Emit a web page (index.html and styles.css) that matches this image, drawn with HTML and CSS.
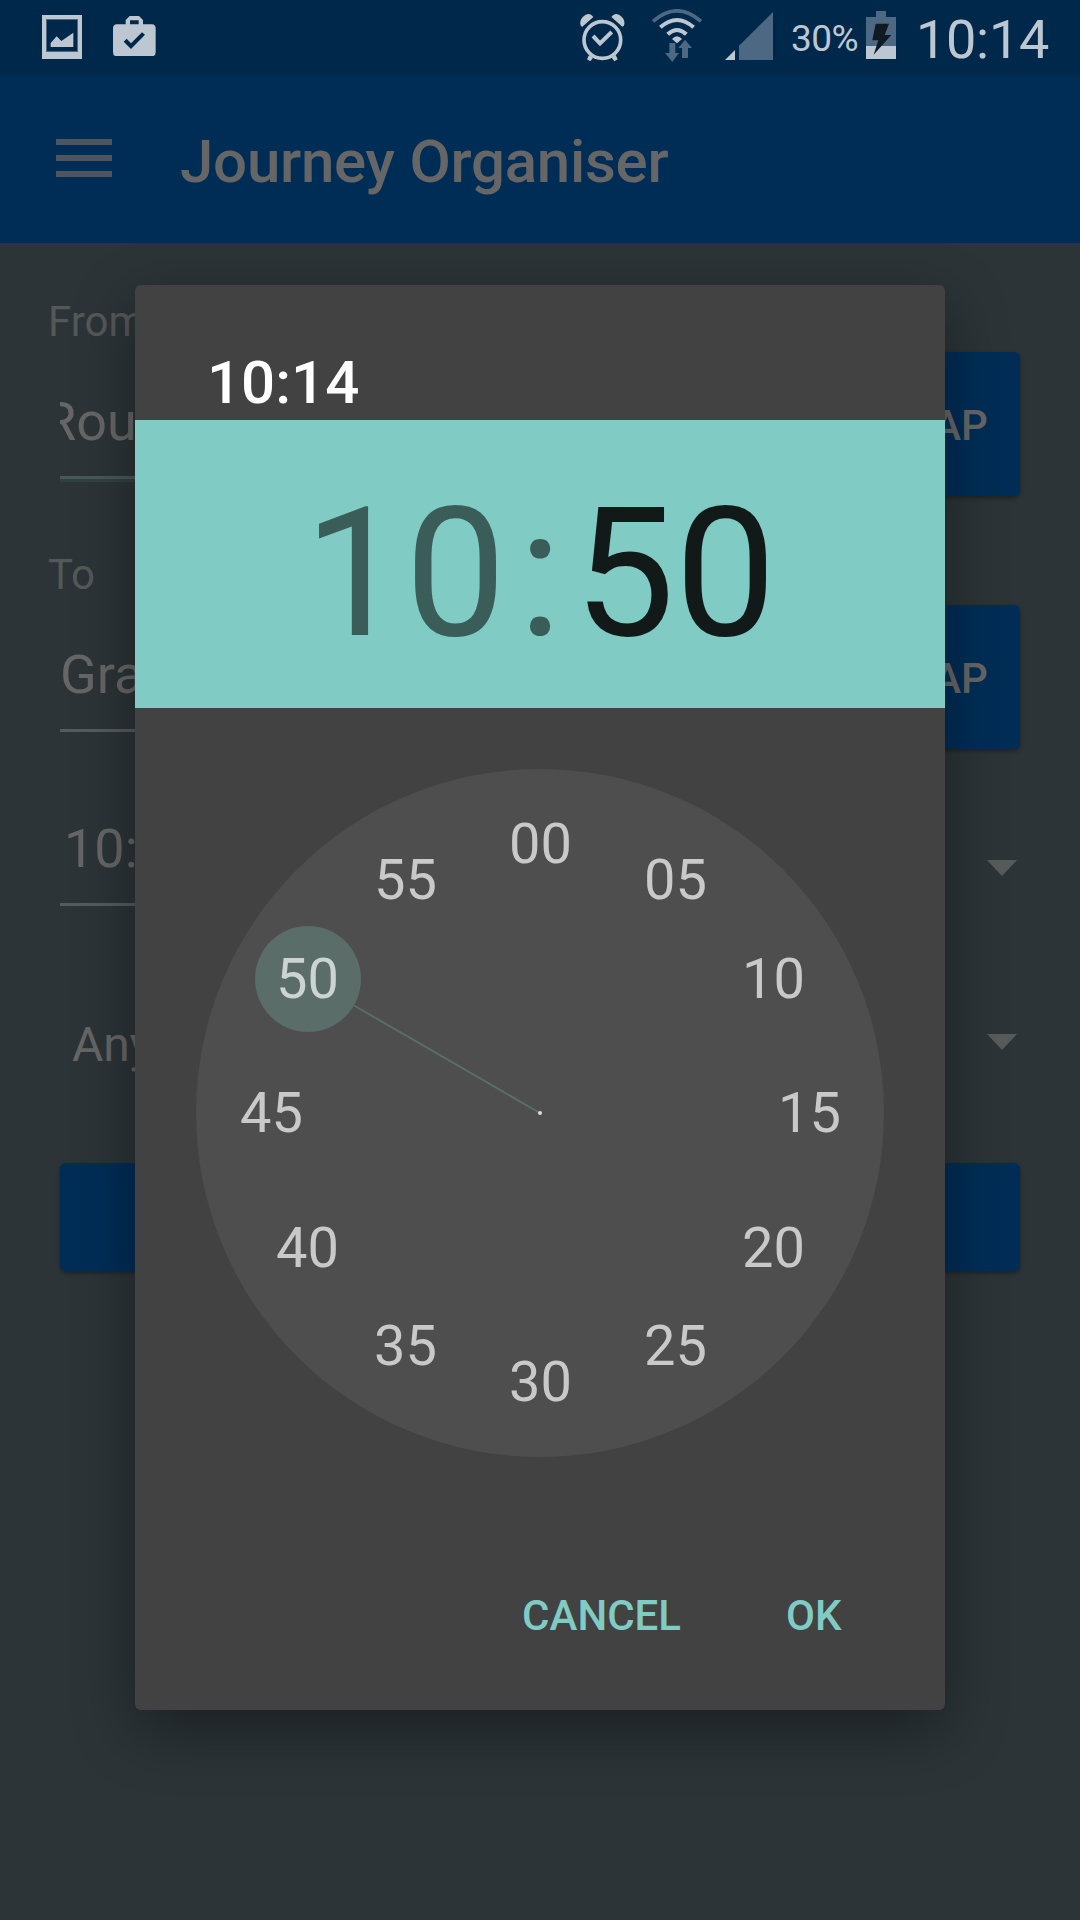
FILE: index.html
```html
<!DOCTYPE html>
<html lang="en">
<head>
<meta charset="utf-8">
<title>Journey Organiser</title>
<link rel="stylesheet" href="styles.css">
</head>
<body>
<div class="screen">
  <header class="status">
    <svg class="icon-picture" viewBox="0 0 120 132"><path fill="#bdc7d1" fill-rule="evenodd" d="M0 0H120V132H0ZM13 13V110H107V13Z"/><path fill="#4d6882" fill-rule="evenodd" d="M12 12H108V111H12ZM15 15V108H105V15Z"/><path fill="#bdc7d1" d="M26 96V84L44 64L58 78L94 53V96Z"/></svg>
    <svg class="icon-bag" viewBox="0 0 128 121"><path fill="#bdc7d1" fill-rule="evenodd" d="M11 25H38V12L50 0H78L90 12V25H117Q128 26 128 37V109Q128 121 116 121H12Q0 121 0 109V37Q0 26 11 25ZM51 13V25H77V13ZM32 77L54 99L96 56L87 49L54 82L41 68Z"/></svg>
    <span class="spacer"></span>
    <svg class="icon-alarm" viewBox="0 0 134 144" fill="none" stroke="#bdc7d1"><circle cx="67" cy="81" r="55" stroke-width="11"/><path fill="#bdc7d1" stroke="none" d="M3 39Q-4 24 9 11Q23-3 35 7L40 12L7 41ZM131 39Q138 24 125 11Q111-3 99 7L94 12L127 41ZM27 126L39 134L31 145L21 139ZM107 126L95 134L103 145L113 139Z"/><path d="M39 69L60 91L95 57" stroke-width="12"/></svg>
    <svg class="icon-wifi" viewBox="0 0 150 160" fill="none"><path d="M3 37Q75-26 147 37" stroke="#4d6882" stroke-width="11"/><path d="M25 55Q75 11 125 55M47 76Q75 50 103 76" stroke="#bdc7d1" stroke-width="12"/><path fill="#bdc7d1" d="M60 90Q75 73 90 90L75 103Z"/><path fill="#4d6882" d="M52 102H70V132H81L61 159L39 132H52ZM99 92L120 117H108V147H90V117H79Z"/></svg>
    <svg class="icon-signal" viewBox="0 0 144 144"><path fill="#bdc7d1" d="M0 144L30 114V144Z"/><path fill="#4d6882" d="M42 144V101L144 0V144Z"/></svg>
    <span class="battery-text">30%</span>
    <svg class="icon-battery" viewBox="0 0 90 144"><path fill="#4d6882" d="M30 0H60V18H90V105H0V18H30Z"/><path fill="#bdc7d1" d="M0 105H90V144H0Z"/><path fill="#101a22" d="M29 38H69L56 72H76L23 131L37 88H19Z"/></svg>
    <span class="clock">10:14</span>
  </header>

  <nav class="appbar">
    <div class="menu"><i></i><i></i><i></i></div>
    <h1>Journey Organiser</h1>
  </nav>

  <main class="form">
    <section class="field">
      <label>From</label>
      <div class="row">
        <div class="input input-active"><span class="scrolled">Rou</span></div>
        <button class="btn">MAP</button>
      </div>
    </section>
    <section class="field">
      <label>To</label>
      <div class="row">
        <div class="input">Gra</div>
        <button class="btn">MAP</button>
      </div>
    </section>
    <div class="time-row">
      <div class="time-input">10:</div>
      <i class="caret"></i>
    </div>
    <div class="mode-row">
      <span>Any</span>
      <i class="caret"></i>
    </div>
    <button class="btn submit" aria-label="Submit"></button>
  </main>

  <div class="dialog">
    <h2>10:14</h2>
    <div class="time"><span>10</span><span>:</span><b>50</b></div>
    <svg class="dial" viewBox="0 0 688 688">
      <circle cx="344" cy="344" r="344" fill="#4e4e4e"/>
      <path d="M344 344L158 236.500" stroke="#5a6d69" stroke-width="2"/>
      <circle cx="112" cy="210" r="53" fill="#5a6d69"/>
      <circle cx="344" cy="344" r="2" fill="#dddddd"/>
      <g class="numbers">
        <text x="344.500" y="94">00</text>
        <text x="479.500" y="130">05</text>
        <text x="577.500" y="229">10</text>
        <text x="613.500" y="363">15</text>
        <text x="577.500" y="498">20</text>
        <text x="479.500" y="596">25</text>
        <text x="344.500" y="632">30</text>
        <text x="209.500" y="596">35</text>
        <text x="111.500" y="498">40</text>
        <text x="75.500" y="363">45</text>
        <text x="111.500" y="229" class="picked">50</text>
        <text x="209.500" y="130">55</text>
      </g>
    </svg>
    <div class="actions"><span>CANCEL</span><span>OK</span></div>
  </div>
</div>
</body>
</html>
```
FILE: styles.css
```css
* { box-sizing: border-box; }
body { margin: 0; font-family: Roboto, sans-serif; }
.screen {
  position: relative;
  width: 1080px;
  height: 1920px;
  overflow: hidden;
  background: #2c3437;
}
svg { display: block; flex: none; }

/* Status bar */
.status {
  display: flex;
  align-items: flex-start;
  height: 75px;
  padding: 0 28px 0 42px;
  background: #00284b;
  color: #bdc7d1;
}
.spacer { flex: 1; }
.icon-picture { width: 40px; height: 44px; margin-top: 15px; }
.icon-bag { width: 42.7px; height: 40.3px; margin: 15.5px 0 0 31px; }
.icon-alarm { width: 44.7px; height: 48px; margin: 12.5px 27px 0 0; overflow: visible; }
.icon-wifi { width: 50px; height: 53.3px; margin: 9px 23.3px 0 0; }
.icon-signal { width: 48px; height: 48px; margin: 12px 17.7px 0 0; }
.battery-text { width: 69px; margin: 17px 6px 0 0; font-size: 37px; line-height: 44px; letter-spacing: -0.6px; }
.icon-battery { width: 30px; height: 48px; margin: 11px 20px 0 0; }
.clock { width: 136px; margin-top: 8px; font-size: 54px; line-height: 63px; letter-spacing: -0.3px; white-space: nowrap; }

/* App bar */
.appbar {
  display: flex;
  height: 168px;
  padding-left: 56px;
  background: #002d56;
}
.menu { display: flex; flex-direction: column; gap: 10px; width: 56px; margin: 64px 68px 0 0; }
.menu i { height: 6px; background: #4d5660; }
h1 { margin: 51px 0 0; font-size: 60px; font-weight: 500; line-height: 72px; letter-spacing: -0.25px; color: #666; }

/* Form */
.form { padding: 54px 60px 0 48px; color: #666; }
.field { height: 253px; }
label { display: block; height: 55px; font-size: 42px; line-height: 50px; color: #545859; }
.row { display: flex; justify-content: space-between; height: 144px; padding-left: 12px; }
.input {
  width: 700px;
  height: 127px;
  padding: 38px 0 0;
  border-bottom: 3px solid #565b5d;
  font-size: 54px;
  line-height: 64px;
  overflow: hidden;
}
.input-active { height: 130px; border-bottom-color: #304240; box-shadow: inset 0 -3px #465a58; }
.scrolled { margin-left: -17px; }
.btn {
  width: 154px;
  padding: 3px 2px 0 0;
  border: 0;
  border-radius: 6px;
  background: #002d56;
  box-shadow: 0 2px 4px rgba(0, 0, 0, .35);
  color: #666;
  font: 500 42px/50px Roboto, sans-serif;
}
.time-row {
  display: flex;
  justify-content: space-between;
  height: 103px;
  padding-left: 12px;
}
.time-input {
  width: 700px;
  padding: 14px 0 0 4px;
  border-bottom: 3px solid #565b5d;
  font-size: 54px;
  line-height: 64px;
}
.caret {
  width: 30px;
  height: 16px;
  margin: 57px 3px 0 0;
  background: #575b5c;
  clip-path: polygon(0 0, 100% 0, 50% 100%);
}
.mode-row {
  display: flex;
  justify-content: space-between;
  height: 58px;
  margin-top: 109px;
  padding-left: 24px;
  font-size: 48px;
  line-height: 60px;
}
.mode-row .caret { margin-top: 19px; }
.submit { display: block; width: 960px; height: 108px; margin: 90px 0 0 12px; }

/* Time picker dialog */
.dialog {
  position: absolute;
  left: 135px;
  top: 285px;
  display: flex;
  flex-direction: column;
  width: 810px;
  height: 1425px;
  border-radius: 6px;
  background: #424242;
  box-shadow: 0 20px 60px rgba(0, 0, 0, .38);
}
h2 {
  height: 135px;
  margin: 0;
  padding: 62px 0 0 72px;
  font-size: 60px;
  font-weight: 500;
  line-height: 72px;
  color: #fff;
}
.time {
  display: flex;
  justify-content: center;
  gap: 12px;
  height: 288px;
  background: #80cbc4;
  color: #3b5d5a;
  font-size: 180px;
  line-height: 307px;
}
.time b { font-weight: 400; color: #111a19; }
.dial { width: 688px; height: 688px; margin: 61px auto 0; }
.numbers { font-size: 56px; fill: #c9c9c9; text-anchor: middle; }
.picked { fill: #ccd3d3; }
.actions {
  display: flex;
  justify-content: flex-end;
  gap: 105px;
  margin-top: 134px;
  padding-right: 103.5px;
  color: #80cbc4;
  font-size: 42px;
  font-weight: 500;
  line-height: 50px;
}
```
